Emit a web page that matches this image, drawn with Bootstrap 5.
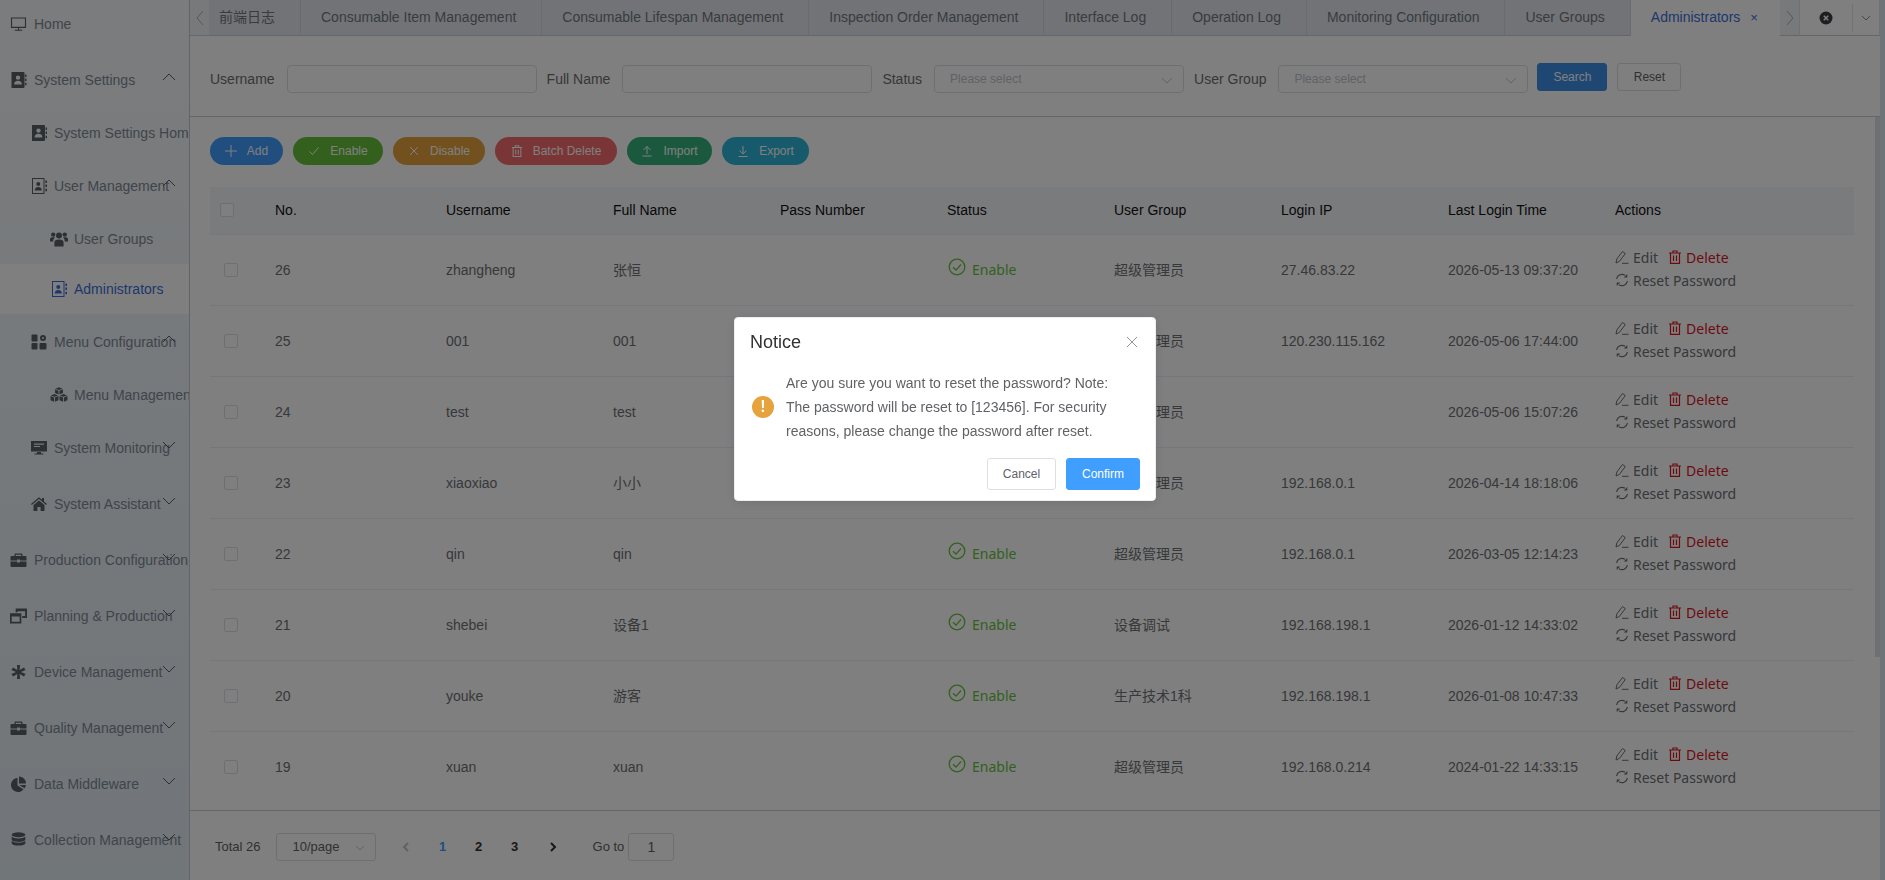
<!DOCTYPE html>
<html lang="en">
<head>
  <meta charset="UTF-8" />
  <meta name="viewport" content="width=device-width, initial-scale=1" />
  <link href="https://cdn.jsdelivr.net/npm/bootstrap@5.3.1/dist/css/bootstrap.min.css" rel="stylesheet" />
  <title>Administrators</title>
  <style>
    html, body { height: 100%; overflow: hidden; }
    body {
      font-family: "Liberation Sans", "Noto Sans CJK SC", sans-serif;
      font-size: 14px;
      color: #606266;
      background: #dfe8f1;
    }
    .ico { width: 16px; height: 16px; fill: currentColor; fill-rule: evenodd; flex: none; }

    /* sidebar */
    .side-bar {
      width: 190px;
      height: 880px;
      flex: none;
      overflow: hidden;
      border-right: 1px solid #c3cbd6;
      background: linear-gradient(#f6f9fc, #e3ecf3);
    }
    .side-item {
      position: relative;
      height: 50px;
      margin-top: 3px;
      display: flex;
      align-items: center;
      white-space: nowrap;
      color: #7e8a96;
    }
    .side-item .ico { margin-right: 7px; color: #5a6067; }
    .side-item.lv1 { padding-left: 10px; margin-top: 6px; }
    .side-item.lv1 .ico { width: 17px; }
    .side-item.lv2 { padding-left: 31px; }
    .side-item.lv3 { padding-left: 50px; }
    .side-item.lv3 .ico { width: 18px; margin-right: 6px; }
    .side-item.lv2.gap-top { margin-top: 6px; }
    .side-item.first { margin-top: -1px; }
    .side-item.tight { margin-top: 0; }
    .side-item.current { background: #fff; color: #3a6fd8; }
    .side-item.current .ico { color: #3a6fd8; }
    .side-arrow {
      position: absolute;
      left: 162px;
      top: 15px;
      width: 14px;
      height: 14px;
      fill: none;
      stroke: #5a6067;
      stroke-width: 1;
    }

    /* tabs */
    .main-pane { min-width: 0; margin-right: 5px; background: #fff; }
    .tab-strip {
      height: 36px;
      flex: none;
      background: #fff;
      display: flex;
      white-space: nowrap;
    }
    .tab-nav-btn {
      width: 19px;
      flex: none;
      background: #f0f3f7;
      border-bottom: 1px solid #c7ccd6;
      display: flex;
      align-items: center;
      justify-content: center;
      color: #a7aeb6;
    }
    .tab-list { flex: 1; display: flex; overflow: hidden; }
    .tab-cell {
      padding: 0 25px 0 20px;
      line-height: 35px;
      border-left: 1px solid #d2d6de;
      border-bottom: 1px solid #c7ccd6;
      background: #e4e7ed;
      color: #707880;
      flex: none;
    }
    .tab-cell.clipped { padding: 0 0 0 10px; border-left: 0; width: 91px; }
    .tab-cell.on { background: #fff; color: #3a6fd8; padding-right: 0; flex: 1; border-bottom: 0; }
    .tab-cell.on span { font-size: 13px; margin-left: 10px; }
    .tab-tools { width: 81px; flex: none; display: flex; align-items: center; border-left: 1px solid #dfe3e8; border-right: 1px solid #dfe3e8; border-bottom: 1px solid #c7ccd6; }
    .tab-tool { width: 53px; height: 28px; display: flex; align-items: center; justify-content: center; border-right: 1px solid #dfe3e8; color: #3a3f44; }
    .tab-tool-end { flex: 1; display: flex; justify-content: center; color: #8a9097; }

    /* filter form */
    .filter-bar {
      height: 81px;
      flex: none;
      padding: 29px 0 0 20px;
      border-bottom: 1px solid #c7ccd6;
      display: flex;
      align-items: flex-start;
    }
    .filter-label { line-height: 28px; color: #6b6e72; padding-right: 12px; margin-left: 10px; flex: none; }
    .filter-label.lead-label { margin-left: 0; }
    .filter-input, .filter-select {
      width: 250px;
      height: 28px;
      border: 1px solid #dcdfe6;
      border-radius: 4px;
      background: #fff;
      position: relative;
      flex: none;
      font-size: 12px;
      color: #c0c4cc;
      line-height: 26px;
      padding-left: 15px;
    }
    .filter-select svg { position: absolute; right: 10px; top: 8px; width: 12px; height: 12px; fill: none; stroke: #c0c4cc; }
    .flat-btn { height: 28px; border-radius: 3px; font-size: 12px; padding: 0; line-height: 26px; margin-top: -2px; }
    .flat-btn.go { width: 70px; margin-left: 9px; background: #3f8fe8; border: 1px solid #3f8fe8; color: #fff; }
    .flat-btn.clear { width: 64px; margin-left: 10px; background: #fff; border: 1px solid #dcdfe6; color: #606266; }

    /* toolbar */
    .action-bar { height: 70px; flex: none; padding: 20px 0 0 20px; display: flex; gap: 10px; }
    .pill-btn {
      height: 28px;
      border: 0;
      border-radius: 14px;
      color: #fff;
      font-size: 12px;
      display: flex;
      align-items: center;
      justify-content: center;
      gap: 10px;
      padding: 0;
    }
    .pill-btn .ico { width: 12px; height: 12px; }

    /* table */
    .grid-wrap { flex: 1; padding: 0 0 0 20px; overflow: hidden; min-height: 0; }
    .data-grid { table-layout: fixed; width: 1644px; margin: 0; font-size: 14px; --bs-table-bg: transparent; color: #606266; }
    .data-grid th { height: 47px; background: #f5f7fa; font-weight: 400; color: #111; padding: 0 10px; vertical-align: middle; border-bottom: 1px solid #ebeef5; }
    .data-grid td { height: 71px; padding: 1px 10px 0; vertical-align: middle; border-bottom: 1px solid #ebeef5; color: #6e7074; }
    .tick { width: 14px; height: 14px; border: 1px solid #dcdfe6; border-radius: 2px; background: #fff; display: block; }
    td .tick { margin-left: 4px; }
    .state-on { color: #67c23a; display: flex; align-items: center; gap: 6px; margin-left: 1px; font-family: "Noto Sans", sans-serif; margin-top: -2px; }
    .state-on .ico { width: 18px; height: 18px; margin-top: -4px; }
    .act-block { margin-top: -3px; }
    .act-line { font-family: "Noto Sans", sans-serif; display: flex; align-items: center; line-height: 23px; color: #6e7074; }
    .act-line .ico { width: 14px; height: 14px; margin-right: 4px; }
    .act-del { color: #d9171f; margin-left: 10px; display: inline-flex; align-items: center; }
    .bar-thumb { position: fixed; left: 1875px; top: 117px; width: 5px; height: 540px; background: #dce1e6; }

    /* pager */
    .pager-bar {
      height: 70px;
      flex: none;
      margin-top: 8px;
      border-top: 1px solid #c7ccd6;
      padding: 22px 0 0 25px;
      display: flex;
      align-items: flex-start;
      line-height: 28px;
      font-size: 13px;
    }
    .pager-select { width: 100px; height: 28px; margin-left: 15px; border: 1px solid #dcdfe6; border-radius: 3px; position: relative; padding-left: 16px; line-height: 26px; color: #606266; }
    .pager-select svg { position: absolute; right: 10px; top: 9px; width: 10px; height: 10px; fill: none; stroke: #c0c4cc; }
    .pager-num { width: 36px; text-align: center; font-weight: 700; color: #303133; }
    .pager-arrow { display: flex; justify-content: center; align-items: center; height: 28px; }
    .pager-arrow.prev { width: 38px; margin-left: 11px; color: #c0c4cc; }
    .pager-arrow.next { width: 40px; margin-right: 20px; color: #303133; }
    .pager-arrow svg { width: 12px; height: 12px; fill: none; stroke: currentColor; stroke-width: 2; }
    .pager-jump { width: 46px; height: 28px; border: 1px solid #dcdfe6; border-radius: 3px; margin-left: 4px; text-align: center; line-height: 26px; font-size: 14px; }

    /* dialog */
    .notice-box {
      position: absolute;
      left: 734px;
      top: 317px;
      width: 422px;
      height: 184px;
      background: #fff;
      border-radius: 4px;
      border: 1px solid #ebeef5;
      box-shadow: 0 2px 12px rgba(0,0,0,.1);
      padding: 15px;
    }
    .notice-title { font-size: 18px; line-height: 18px; color: #303133; }
    .notice-close { position: absolute; right: 16px; top: 17px; width: 14px; height: 14px; stroke: #909399; fill: none; }
    .notice-body { display: flex; align-items: center; margin-top: 20px; padding-left: 2px; color: #606266; line-height: 24px; }
    .notice-text { width: 342px; }
    .notice-mark { width: 22px; height: 22px; border-radius: 50%; background: #e6a23c; color: #fff; font-weight: 700; font-size: 16px; line-height: 22px; text-align: center; flex: none; margin-right: 12px; }
    .notice-foot { position: absolute; right: 15px; top: 140px; display: flex; gap: 10px; }
    .notice-foot button { height: 32px; font-size: 12px; border-radius: 3px; padding: 0; }
    .notice-cancel { width: 69px; background: #fff; border: 1px solid #dcdfe6; color: #606266; }
    .notice-ok { width: 74px; background: #409eff; border: 1px solid #409eff; color: #fff; }
  </style>
</head>
<body class="d-flex">
  <svg width="0" height="0" class="position-absolute">
    <symbol id="i-monitor" viewBox="0 0 18 16"><path fill="none" stroke="currentColor" stroke-width="1.2" d="M1.600 1.600h14.800v10H1.600zM9 11.600v3M5 14.600h8"/></symbol>
    <symbol id="i-book" viewBox="0 0 16 16"><path d="M1 0h12a1 1 0 0 1 1 1v14a1 1 0 0 1-1 1H1zM7.500 3.400a2.200 2.200 0 1 0 0 4.400 2.200 2.200 0 0 0 0-4.400zM3.600 12.600h7.800c0-2.600-1.400-3.800-3.900-3.800s-3.900 1.200-3.900 3.800zM14.600 2.500H16v2.400h-1.400zM14.600 6.600H16V9h-1.400zM14.600 10.800H16v2.400h-1.400z"/></symbol>
    <symbol id="i-book-line" viewBox="0 0 16 16"><path d="M1 0h12.500v16H1zM2 1v14h10.500V1zM7.300 4a2 2 0 1 0 0 4 2 2 0 0 0 0-4zM3.800 12.400h7c0-2.200-1.200-3.500-3.500-3.500s-3.500 1.300-3.500 3.500zM14.400 2.500H16v2.400h-1.600zM14.400 6.600H16V9h-1.600zM14.400 10.800H16v2.400h-1.600z"/></symbol>
    <symbol id="i-users" viewBox="0 0 18 16"><circle cx="9" cy="4.500" r="3"/><circle cx="3.200" cy="3.600" r="2.200"/><circle cx="14.800" cy="3.600" r="2.200"/><path d="M4.400 15.500v-4c0-2 1.400-3 4.600-3s4.600 1 4.600 3v4zM0 10.500V8c0-1.200 1-1.800 3.200-1.800.8 0 1.400.1 1.800.3-1.200.8-1.700 1.900-1.700 4zM18 10.500V8c0-1.200-1-1.800-3.200-1.800-.8 0-1.400.1-1.800.3 1.200.8 1.700 1.900 1.700 4z"/></symbol>
    <symbol id="i-apps" viewBox="0 0 16 16"><rect x="0.500" y="0.500" width="6" height="7" rx="1"/><rect x="0.500" y="9" width="6" height="6.500" rx="1"/><rect x="8.500" y="9" width="7" height="6.500" rx="1"/><path d="M12 1a3 3 0 1 0 0 6 3 3 0 0 0 0-6zm0 2a1 1 0 1 1 0 2 1 1 0 0 1 0-2z"/></symbol>
    <symbol id="i-cubes" viewBox="0 0 20 17"><path d="M10 0l3.900 1.500L10 3 6.100 1.500zM5.600 2.200l3.900 1.500v4.200L5.600 6.300zM14.400 2.200l-3.900 1.500v4.200l3.900-1.600zM5 7.500l3.900 1.500L5 10.500 1.100 9zM.6 9.700l3.900 1.500v4.800L.6 14.200zM9.400 9.700l-3.900 1.500V16l3.900-1.800zM15 7.500l3.900 1.500-3.900 1.500L11.100 9zM10.600 9.700l3.900 1.500V16l-3.900-1.800zM19.400 9.700l-3.900 1.500V16l3.900-1.800z"/></symbol>
    <symbol id="i-desktop" viewBox="0 0 16 16"><path d="M0 1h16v10.500H0zM3 3.500v1.200h10V3.500zM3 6v1h6V6zM6 12h4v1.600h2.500v1H3.500v-1H6z"/></symbol>
    <symbol id="i-house" viewBox="0 0 16 16"><path d="M8 1.200l3 2.500V2h2v3.400L16 8l-.8 1L8 3 .8 9 0 8zM2.500 9L8 4.500 13.500 9v6H9.600v-4H6.400v4H2.500z"/></symbol>
    <symbol id="i-case" viewBox="0 0 16 16"><path d="M5 1.500h6a1 1 0 0 1 1 1V4h3a1 1 0 0 1 1 1v3.400H9.500V7.500h-3v.9H0V5a1 1 0 0 1 1-1h3V2.500a1 1 0 0 1 1-1zm.3 1.200V4h5.400V2.700zM0 9.400h6.500v1.200h3V9.400H16V14a1 1 0 0 1-1 1H1a1 1 0 0 1-1-1z"/></symbol>
    <symbol id="i-window" viewBox="0 0 18 16"><path d="M6 0h12v10h-5V8h3V3H8v1H6zM0 5h12v11H0zM1.800 8.500v5.700h8.400V8.500z"/></symbol>
    <symbol id="i-star" viewBox="0 0 16 16"><path d="M6.500 1h3l-.3 5 4.300-2.600 1.500 2.600L10.500 8l4.500 2-1.500 2.600L9.200 10l.3 5h-3l.3-5-4.300 2.600L1 10l4.500-2L1 6l1.500-2.600L6.800 6z"/></symbol>
    <symbol id="i-pie" viewBox="0 0 16 16"><path d="M7 2v7.500l6 3.800A7 7 0 1 1 7 2zM8.500.5a7 7 0 0 1 7 7h-7zM8.800 9h6.700a7 7 0 0 1-1.500 3.300z"/></symbol>
    <symbol id="i-db" viewBox="0 0 16 16"><ellipse cx="8" cy="2.800" rx="6.800" ry="2.500"/><path d="M1.200 4.600c1 1.300 3.700 2 6.800 2s5.800-.7 6.800-2v2.900c0 1.300-3 2.400-6.800 2.400s-6.800-1.100-6.800-2.400zM1.200 8.700c1 1.300 3.700 2 6.800 2s5.800-.7 6.800-2v2.500c0 1.300-3 2.400-6.800 2.400s-6.800-1.100-6.800-2.400z"/></symbol>
    <symbol id="i-plus" viewBox="0 0 12 12"><path fill="none" stroke="currentColor" d="M6 0v12M0 6h12"/></symbol>
    <symbol id="i-check" viewBox="0 0 12 12"><path fill="none" stroke="currentColor" d="M1.500 6.500l3 3 6-7"/></symbol>
    <symbol id="i-x" viewBox="0 0 12 12"><path fill="none" stroke="currentColor" d="M2 2l8 8M10 2l-8 8"/></symbol>
    <symbol id="i-trash" viewBox="0 0 14 14"><path fill="none" stroke="currentColor" stroke-width="1.200" d="M1 3h12M5 3V1h4v2M2.500 3v10.400h9V3M5.500 5.500v5.500M8.500 5.500v5.500"/></symbol>
    <symbol id="i-up" viewBox="0 0 12 12"><path fill="none" stroke="currentColor" d="M2.500 5L6 1.500 9.500 5M6 1.500V9M1.500 11h9"/></symbol>
    <symbol id="i-down" viewBox="0 0 12 12"><path fill="none" stroke="currentColor" d="M2.500 5.500L6 9l3.500-3.500M6 1v8M1.500 11.500h9"/></symbol>
    <symbol id="i-ok" viewBox="0 0 18 18"><circle cx="9" cy="9" r="7.800" fill="none" stroke="currentColor" stroke-width="1.300"/><path fill="none" stroke="currentColor" stroke-width="1.300" d="M5 9.300l3 2.800 5-5.600"/></symbol>
    <symbol id="i-edit" viewBox="0 0 14 14"><path fill="none" stroke="currentColor" d="M1 13l.8-4L7.500 1.500l2.800 2L4.500 11.300zM7 13.300h6.500"/></symbol>
    <symbol id="i-reset" viewBox="0 0 14 14"><path fill="none" stroke="currentColor" stroke-width="1.200" d="M1.600 6A5.400 5.400 0 0 1 10 2.300M12.400 8A5.400 5.400 0 0 1 4 11.700"/><path fill="currentColor" d="M12.300 1v3.600H8.800zM1.700 13V9.400h3.500z"/></symbol>
  </svg>

  <aside class="side-bar">
    <div class="side-item lv1 first"><svg class="ico"><use href="#i-monitor"/></svg>Home</div>
    <div class="side-item lv1"><svg class="ico"><use href="#i-book"/></svg>System Settings<svg class="side-arrow" viewBox="0 0 14 14"><path d="M1 10l6-6 6 6"/></svg></div>
    <div class="side-item lv2"><svg class="ico"><use href="#i-book"/></svg>System Settings Home</div>
    <div class="side-item lv2"><svg class="ico"><use href="#i-book-line"/></svg>User Management<svg class="side-arrow" viewBox="0 0 14 14"><path d="M1 10l6-6 6 6"/></svg></div>
    <div class="side-item lv3"><svg class="ico"><use href="#i-users"/></svg>User Groups</div>
    <div class="side-item lv3 tight current"><svg class="ico"><use href="#i-book-line"/></svg>Administrators</div>
    <div class="side-item lv2"><svg class="ico"><use href="#i-apps"/></svg>Menu Configuration<svg class="side-arrow" viewBox="0 0 14 14"><path d="M1 10l6-6 6 6"/></svg></div>
    <div class="side-item lv3"><svg class="ico"><use href="#i-cubes"/></svg>Menu Management</div>
    <div class="side-item lv2"><svg class="ico"><use href="#i-desktop"/></svg>System Monitoring<svg class="side-arrow" viewBox="0 0 14 14"><path d="M1 4l6 6 6-6"/></svg></div>
    <div class="side-item lv2 gap-top"><svg class="ico"><use href="#i-house"/></svg>System Assistant<svg class="side-arrow" viewBox="0 0 14 14"><path d="M1 4l6 6 6-6"/></svg></div>
    <div class="side-item lv1"><svg class="ico"><use href="#i-case"/></svg>Production Configuration<svg class="side-arrow" viewBox="0 0 14 14"><path d="M1 4l6 6 6-6"/></svg></div>
    <div class="side-item lv1"><svg class="ico"><use href="#i-window"/></svg>Planning &amp; Production<svg class="side-arrow" viewBox="0 0 14 14"><path d="M1 4l6 6 6-6"/></svg></div>
    <div class="side-item lv1"><svg class="ico"><use href="#i-star"/></svg>Device Management<svg class="side-arrow" viewBox="0 0 14 14"><path d="M1 4l6 6 6-6"/></svg></div>
    <div class="side-item lv1"><svg class="ico"><use href="#i-case"/></svg>Quality Management<svg class="side-arrow" viewBox="0 0 14 14"><path d="M1 4l6 6 6-6"/></svg></div>
    <div class="side-item lv1"><svg class="ico"><use href="#i-pie"/></svg>Data Middleware<svg class="side-arrow" viewBox="0 0 14 14"><path d="M1 4l6 6 6-6"/></svg></div>
    <div class="side-item lv1"><svg class="ico"><use href="#i-db"/></svg>Collection Management<svg class="side-arrow" viewBox="0 0 14 14"><path d="M1 4l6 6 6-6"/></svg></div>
  </aside>

  <main class="main-pane flex-grow-1 d-flex flex-column">
    <div class="tab-strip">
      <div class="tab-nav-btn"><svg width="10" height="18" viewBox="0 0 10 18" fill="none" stroke="currentColor"><path d="M8 2L2 9l6 7"/></svg></div>
      <div class="tab-list">
        <div class="tab-cell clipped">前端日志</div>
        <div class="tab-cell">Consumable Item Management</div>
        <div class="tab-cell">Consumable Lifespan Management</div>
        <div class="tab-cell">Inspection Order Management</div>
        <div class="tab-cell">Interface Log</div>
        <div class="tab-cell">Operation Log</div>
        <div class="tab-cell">Monitoring Configuration</div>
        <div class="tab-cell">User Groups</div>
        <div class="tab-cell on">Administrators<span>×</span></div>
      </div>
      <div class="tab-nav-btn"><svg width="10" height="18" viewBox="0 0 10 18" fill="none" stroke="currentColor"><path d="M2 2l6 7-6 7"/></svg></div>
      <div class="tab-tools">
        <div class="tab-tool"><svg width="14" height="14" viewBox="0 0 14 14"><circle cx="7" cy="7" r="6.500" fill="currentColor"/><path d="M4.800 4.800l4.400 4.400M9.200 4.800l-4.400 4.400" stroke="#fff" stroke-width="1.500"/></svg></div>
        <div class="tab-tool-end"><svg width="12" height="12" viewBox="0 0 12 12" fill="none" stroke="currentColor"><path d="M2 4l4 4 4-4"/></svg></div>
      </div>
    </div>

    <form class="filter-bar">
      <span class="filter-label lead-label">Username</span>
      <div class="filter-input"></div>
      <span class="filter-label">Full Name</span>
      <div class="filter-input"></div>
      <span class="filter-label">Status</span>
      <div class="filter-select">Please select<svg viewBox="0 0 12 12"><path d="M1 4l5 5 5-5"/></svg></div>
      <span class="filter-label">User Group</span>
      <div class="filter-select">Please select<svg viewBox="0 0 12 12"><path d="M1 4l5 5 5-5"/></svg></div>
      <button type="button" class="btn flat-btn go">Search</button>
      <button type="button" class="btn flat-btn clear">Reset</button>
    </form>

    <div class="action-bar">
      <button type="button" class="pill-btn" style="width:73px;background:#409eff"><svg class="ico"><use href="#i-plus"/></svg>Add</button>
      <button type="button" class="pill-btn" style="width:90px;background:#67c23a"><svg class="ico"><use href="#i-check"/></svg>Enable</button>
      <button type="button" class="pill-btn" style="width:92px;background:#e6a23c"><svg class="ico"><use href="#i-x"/></svg>Disable</button>
      <button type="button" class="pill-btn" style="width:122px;background:#f56c6c"><svg class="ico"><use href="#i-trash"/></svg>Batch Delete</button>
      <button type="button" class="pill-btn" style="width:85px;background:#36b37e"><svg class="ico"><use href="#i-up"/></svg>Import</button>
      <button type="button" class="pill-btn" style="width:87px;background:#2fb5d8"><svg class="ico"><use href="#i-down"/></svg>Export</button>
    </div>

    <div class="grid-wrap">
      <table class="table data-grid">
        <colgroup>
          <col style="width:55px" /><col style="width:171px" />
          <col style="width:167px" /><col style="width:167px" /><col style="width:167px" /><col style="width:167px" /><col style="width:167px" /><col style="width:167px" /><col style="width:167px" />
          <col />
        </colgroup>
        <thead>
          <tr>
            <th><span class="tick"></span></th><th>No.</th><th>Username</th><th>Full Name</th><th>Pass Number</th><th>Status</th><th>User Group</th><th>Login IP</th><th>Last Login Time</th><th>Actions</th>
          </tr>
        </thead>
        <tbody id="user_rows"></tbody>
      </table>
    </div>

    <div class="pager-bar">
      <span>Total 26</span>
      <div class="pager-select">10/page<svg viewBox="0 0 10 10"><path d="M1 3l4 4 4-4"/></svg></div>
      <div class="pager-arrow prev"><svg viewBox="0 0 12 12"><path d="M8 2L4 6l4 4"/></svg></div>
      <div class="pager-num" style="color:#409eff">1</div>
      <div class="pager-num">2</div>
      <div class="pager-num">3</div>
      <div class="pager-arrow next"><svg viewBox="0 0 12 12"><path d="M4 2l4 4-4 4"/></svg></div>
      <span>Go to</span>
      <div class="pager-jump">1</div>
    </div>
  </main>
  <div class="bar-thumb"></div>

  <div class="modal-backdrop show"></div>
  <div class="modal d-block">
    <div class="notice-box">
      <div class="notice-title">Notice</div>
      <svg class="notice-close" viewBox="0 0 14 14"><path d="M2 2l10 10M12 2L2 12"/></svg>
      <div class="notice-body">
        <div class="notice-mark">!</div>
        <div class="notice-text">Are you sure you want to reset the password? Note: The password will be reset to [123456]. For security reasons, please change the password after reset.</div>
      </div>
      <div class="notice-foot">
        <button type="button" class="notice-cancel">Cancel</button>
        <button type="button" class="notice-ok">Confirm</button>
      </div>
    </div>
  </div>

  <script>
    const user_rows = [
      ["26", "zhangheng", "张恒", "超级管理员", "27.46.83.22", "2026-05-13 09:37:20"],
      ["25", "001", "001", "超级管理员", "120.230.115.162", "2026-05-06 17:44:00"],
      ["24", "test", "test", "超级管理员", "", "2026-05-06 15:07:26"],
      ["23", "xiaoxiao", "小小", "超级管理员", "192.168.0.1", "2026-04-14 18:18:06"],
      ["22", "qin", "qin", "超级管理员", "192.168.0.1", "2026-03-05 12:14:23"],
      ["21", "shebei", "设备1", "设备调试", "192.168.198.1", "2026-01-12 14:33:02"],
      ["20", "youke", "游客", "生产技术1科", "192.168.198.1", "2026-01-08 10:47:33"],
      ["19", "xuan", "xuan", "超级管理员", "192.168.0.214", "2024-01-22 14:33:15"]
    ];
    const tbody = document.getElementById('user_rows');
    user_rows.forEach((r) => {
      tbody.insertAdjacentHTML('beforeend', `<tr>
        <td><span class="tick"></span></td><td>${r[0]}</td><td>${r[1]}</td><td>${r[2]}</td><td></td>
        <td><div class="state-on"><svg class="ico"><use href="#i-ok"/></svg>Enable</div></td>
        <td>${r[3]}</td><td>${r[4]}</td><td>${r[5]}</td>
        <td><div class="act-block">
          <div class="act-line"><svg class="ico"><use href="#i-edit"/></svg>Edit<span class="act-del"><svg class="ico"><use href="#i-trash"/></svg>Delete</span></div>
          <div class="act-line"><svg class="ico"><use href="#i-reset"/></svg>Reset Password</div>
        </div></td></tr>`);
    });
  </script>
  <script src="https://cdn.jsdelivr.net/npm/bootstrap@5.3.1/dist/js/bootstrap.bundle.min.js"></script>
</body>
</html>
